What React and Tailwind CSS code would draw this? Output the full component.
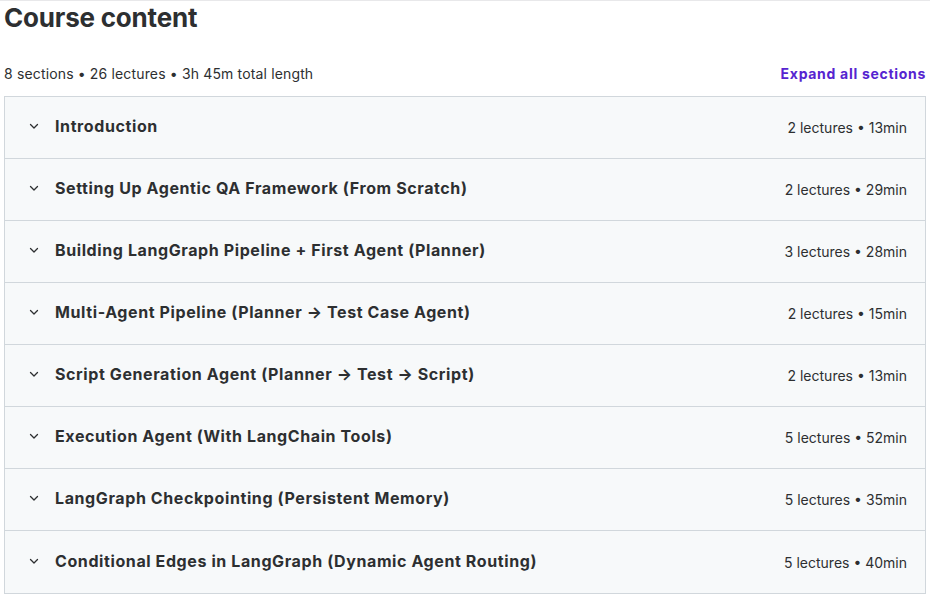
import React from "react";

const sections = [
  { title: "Introduction", meta: "2 lectures • 13min" },
  { title: "Setting Up Agentic QA Framework (From Scratch)", meta: "2 lectures • 29min" },
  { title: "Building LangGraph Pipeline + First Agent (Planner)", meta: "3 lectures • 28min" },
  { title: "Multi-Agent Pipeline (Planner → Test Case Agent)", meta: "2 lectures • 15min" },
  { title: "Script Generation Agent (Planner → Test → Script)", meta: "2 lectures • 13min" },
  { title: "Execution Agent (With LangChain Tools)", meta: "5 lectures • 52min" },
  { title: "LangGraph Checkpointing (Persistent Memory)", meta: "5 lectures • 35min" },
  { title: "Conditional Edges in LangGraph (Dynamic Agent Routing)", meta: "5 lectures • 40min" },
];

function Chevron() {
  return (
    <svg width="12" height="12" viewBox="0 0 12 12" fill="none" className="shrink-0 mb-[3px]">
      <path d="M2.5 4.5L6 8L9.5 4.5" stroke="#2d2f31" strokeWidth="1.3" strokeLinecap="round" strokeLinejoin="round" />
    </svg>
  );
}

export default function App() {
  return (
    <div className="w-[930px] h-[599px] bg-white border-t border-[#e8e8ea] overflow-hidden text-[#2d2f31]" style={{ fontFamily: "Inter, 'Noto Sans', sans-serif" }}>
      <h2 className="pl-1 pt-[1px] text-[26px] leading-[32px] font-bold tracking-[-0.2px] text-[#2d2f31]">Course content</h2>
      <div className="flex items-center justify-between pl-1 pr-1 mt-[29px] h-[20px]">
        <span className="text-[14px] tracking-[0.15px] text-[#2d2f31]">8 sections • 26 lectures • 3h 45m total length</span>
        <span className="text-[14px] font-bold tracking-[0.7px] text-[#5624d0]">Expand all sections</span>
      </div>
      <div className="mx-1 mt-[13px] border border-[#d1d7dc] bg-[#f7f9fa]">
        {sections.map((s, i) => (
          <div
            key={i}
            className={`flex items-center h-[62px] pl-[23px] pr-[18px] ${i < sections.length - 1 ? "border-b border-[#d1d7dc]" : ""}`}
          >
            <Chevron />
            <span className="ml-[15px] mb-[3px] text-[16px] font-bold text-[#2d2f31] tracking-[0.6px]">{s.title}</span>
            <span className="ml-auto text-[14px] text-[#2d2f31]">{s.meta}</span>
          </div>
        ))}
      </div>
    </div>
  );
}
